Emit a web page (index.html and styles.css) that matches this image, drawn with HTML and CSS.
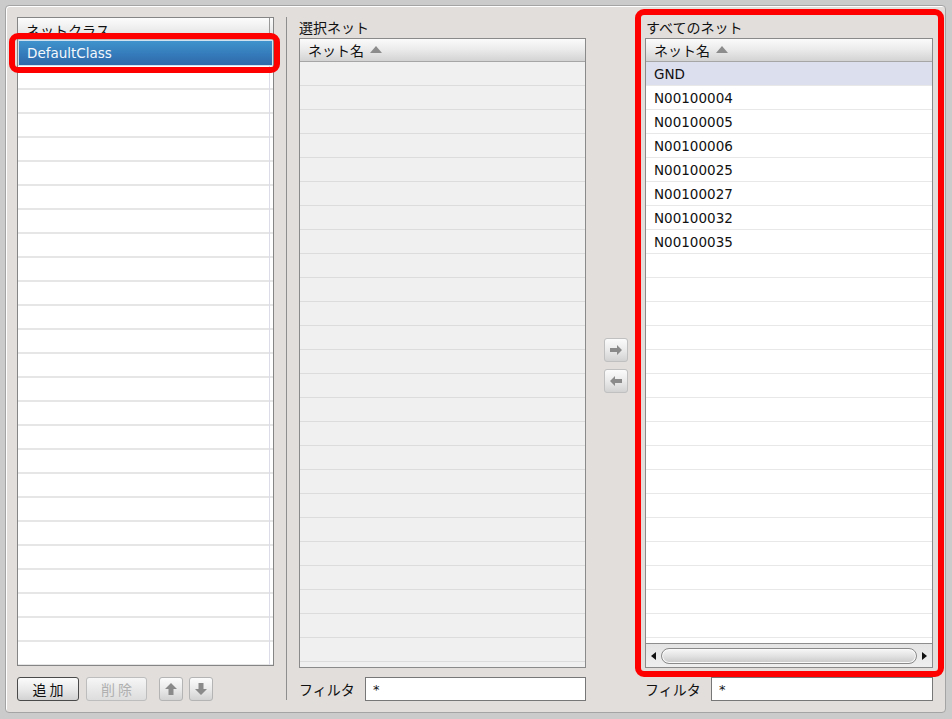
FILE: index.html
```html
<!DOCTYPE html>
<html lang="ja">
<head>
<meta charset="utf-8">
<title>ネットクラス</title>
<link rel="stylesheet" href="styles.css">
</head>
<body>
<div class="panel">
  <div class="col-left">
    <div class="list">
      <div class="list-head"><span class="lh-cell">ネットクラス</span><span class="lh-fill"></span></div>
      <div class="list-body">
        <div class="list-item selected">DefaultClass</div>
      </div>
    </div>
    <div class="btn-row">
      <button class="btn text-btn">追 加</button>
      <button class="btn text-btn disabled">削 除</button>
      <button class="btn icon-btn up-btn"><svg width="14" height="14" viewBox="0 0 14 14"><path d="M7 1 L13 7 L9.5 7 L9.5 13 L4.5 13 L4.5 7 L1 7 Z" fill="#8a8a8a"/></svg></button>
      <button class="btn icon-btn"><svg width="14" height="14" viewBox="0 0 14 14"><path d="M7 13 L13 7 L9.5 7 L9.5 1 L4.5 1 L4.5 7 L1 7 Z" fill="#8a8a8a"/></svg></button>
    </div>
  </div>
  <div class="sep"></div>
  <div class="col-mid">
    <div class="caption">選択ネット</div>
    <div class="table gray">
      <div class="thead"><span>ネット名</span><span class="sort"></span></div>
      <div class="tbody"></div>
    </div>
    <div class="filter">
      <span class="filter-label">フィルタ</span>
      <input class="filter-input" type="text" value="*">
    </div>
  </div>
  <div class="col-arrows">
    <button class="btn icon-btn"><svg width="16" height="12" viewBox="0 0 16 12"><path d="M2 4 L9 4 L9 1 L14 6 L9 11 L9 8 L2 8 Z" fill="#8a8a8a"/></svg></button>
    <button class="btn icon-btn"><svg width="16" height="12" viewBox="0 0 16 12"><path d="M14 4 L7 4 L7 1 L2 6 L7 11 L7 8 L14 8 Z" fill="#8a8a8a"/></svg></button>
  </div>
  <div class="col-right">
    <div class="caption">すべてのネット</div>
    <div class="table white">
      <div class="thead"><span>ネット名</span><span class="sort"></span></div>
      <div class="tbody">
        <div class="row current">GND</div>
        <div class="row">N00100004</div>
        <div class="row">N00100005</div>
        <div class="row">N00100006</div>
        <div class="row">N00100025</div>
        <div class="row">N00100027</div>
        <div class="row">N00100032</div>
        <div class="row">N00100035</div>
      </div>
      <div class="hscroll">
        <span class="arr-left"></span>
        <span class="thumb"></span>
        <span class="arr-right"></span>
      </div>
    </div>
    <div class="filter">
      <span class="filter-label">フィルタ</span>
      <input class="filter-input" type="text" value="*">
    </div>
  </div>
  <div class="hl hl-left"></div>
  <div class="hl hl-right"></div>
</div>
</body>
</html>
```

FILE: styles.css
```css
* { box-sizing: border-box; }
html, body { margin: 0; padding: 0; }
body {
  width: 952px;
  height: 719px;
  background: #cbcbcb;
  font-family: "DejaVu Sans", "Noto Sans CJK JP", sans-serif;
  font-size: 14px;
  color: #111;
  overflow: hidden;
}
.panel {
  position: relative;
  margin: 5px 0 0 5px;
  width: 941px;
  height: 708px;
  background: #e1dedc;
  border: 1px solid #a4a4a4;
  border-radius: 4px;
  box-shadow: inset 1px 1px 0 #ffffff;
  display: flex;
  align-items: flex-start;
  padding: 11px 0 0 11px;
}
.col-left { width: 257px; display: flex; flex-direction: column; }
.list {
  height: 649px;
  border: 1px solid #858585;
  background: #ffffff;
  display: flex;
  flex-direction: column;
}
.list-head {
  height: 22px;
  display: flex;
  background: linear-gradient(#fcfcfc, #eeeeee 50%, #dcdcdc);
  border-bottom: 1px solid #b8b8b8;
}
.lh-cell {
  width: 252px;
  padding-left: 8px;
  line-height: 24px;
  font-family: "Noto Sans CJK JP", sans-serif;
  border-right: 1px solid #999;
}
.lh-fill { flex: 1; }
.list-body {
  flex: 1;
  background:
    linear-gradient(90deg, transparent 251px, #dcdce8 251px, #dcdce8 252px, transparent 252px),
    repeating-linear-gradient(#ffffff 0, #ffffff 22px, #e6e6e6 22px, #e6e6e6 24px);
  background-position: 0 0, 0 2px;
}
.list-item {
  height: 26px;
  line-height: 24px;
  padding-left: 8px;
  font-size: 13.5px;
}
.list-item.selected {
  background: linear-gradient(#3f93cd, #3479b9 60%, #2f69a8);
  border: 1px solid #cfe0ef;
  color: #f4f8fc;
}
.btn-row {
  margin-top: 11px;
  display: flex;
  gap: 7px;
}
.btn {
  height: 24px;
  padding: 0;
  margin: 0;
  background: linear-gradient(#fbfbfb, #eaeaea 50%, #d2d2d2);
  border: 1px solid #b0b0b0;
  border-radius: 3px;
  font-family: "Noto Sans CJK JP", sans-serif;
  font-size: 14px;
  color: #111;
  display: flex;
  align-items: center;
  justify-content: center;
}
.text-btn { width: 62px; border-color: #4a4a4a; }
.text-btn.disabled { width: 61px; color: #b0b0b0; border-color: #bdbdbd; background: linear-gradient(#f6f6f6, #e9e9e9 50%, #dddddd); }
.icon-btn { width: 24px; border-color: #b4b4b4; }
.up-btn { margin-left: 5px; }
.btn-row .icon-btn + .icon-btn { margin-left: -1px; }
.sep {
  margin-left: 12px;
  width: 1px;
  height: 683px;
  background: #8e8e8e;
}
.col-mid { margin-left: 12px; width: 287px; display: flex; flex-direction: column; }
.col-right { width: 288px; display: flex; flex-direction: column; }
.caption {
  height: 21px;
  line-height: 20px;
  font-family: "Noto Sans CJK JP", sans-serif;
}
.col-right .caption { padding-left: 1px; }
.table {
  height: 630px;
  border: 1px solid #8a8a8a;
  display: flex;
  flex-direction: column;
}
.thead {
  height: 23px;
  flex: none;
  display: flex;
  align-items: center;
  gap: 6px;
  padding-left: 8px;
  font-family: "Noto Sans CJK JP", sans-serif;
  background: linear-gradient(#fbfbfb, #ececec 45%, #d3d3d3);
  border-bottom: 1px solid #a6a6a6;
}
.sort {
  width: 0; height: 0;
  border-left: 6px solid transparent;
  border-right: 6px solid transparent;
  border-bottom: 7px solid #8c8c8c;
  margin-top: -2px;
}
.tbody { flex: 1; }
.table.gray .tbody {
  background: repeating-linear-gradient(#f0f0f0 0, #f0f0f0 23px, #dcdcdc 23px, #dcdcdc 24px);
}
.table.white .tbody {
  background: repeating-linear-gradient(#ffffff 0, #ffffff 23px, #e8e8e8 23px, #e8e8e8 24px);
}
.row {
  height: 24px;
  line-height: 23px;
  padding: 1px 0 0 8px;
  font-size: 13.5px;
  border-bottom: 1px solid #e8e8e8;
}
.row.current { background: #dcdfed; }
.hscroll {
  height: 24px;
  flex: none;
  background: linear-gradient(#e4e4e4, #efefef);
  border-top: 1px solid #8e8e8e;
  display: flex;
  align-items: center;
  padding: 0 5px;
}
.arr-left {
  width: 0; height: 0;
  border-top: 4px solid transparent;
  border-bottom: 4px solid transparent;
  border-right: 5px solid #111;
}
.arr-right {
  width: 0; height: 0;
  border-top: 4px solid transparent;
  border-bottom: 4px solid transparent;
  border-left: 5px solid #111;
}
.thumb {
  flex: 1;
  margin: 0 5px;
  height: 16px;
  border: 1px solid #8a8a8a;
  border-radius: 8px;
  background: linear-gradient(#f7f7f7, #e2e2e2 50%, #c9c9c9);
  box-shadow: inset 0 0 0 1px #fafafa;
}
.filter {
  margin-top: 9px;
  height: 24px;
  display: flex;
  align-items: center;
}
.filter-label {
  width: 66px;
  font-family: "Noto Sans CJK JP", sans-serif;
}
.filter-input {
  flex: 1;
  height: 24px;
  border: 1px solid #777;
  background: #fff;
  font-family: "DejaVu Sans", sans-serif;
  font-size: 13px;
  padding: 0 0 0 7px;
  margin: 0;
  outline: none;
  color: #111;
}
.col-arrows {
  width: 59px;
  padding: 321px 0 0 18px;
  display: flex;
  flex-direction: column;
  gap: 7px;
}
.col-arrows .btn { border-color: #c0c0c0; }
.hl {
  position: absolute;
  border: 6px solid #ff0000;
  border-radius: 9px;
  pointer-events: none;
}
.hl-left { left: 3px; top: 27px; width: 271px; height: 40px; }
.hl-right { left: 629px; top: 3px; width: 309px; height: 668px; }
```
